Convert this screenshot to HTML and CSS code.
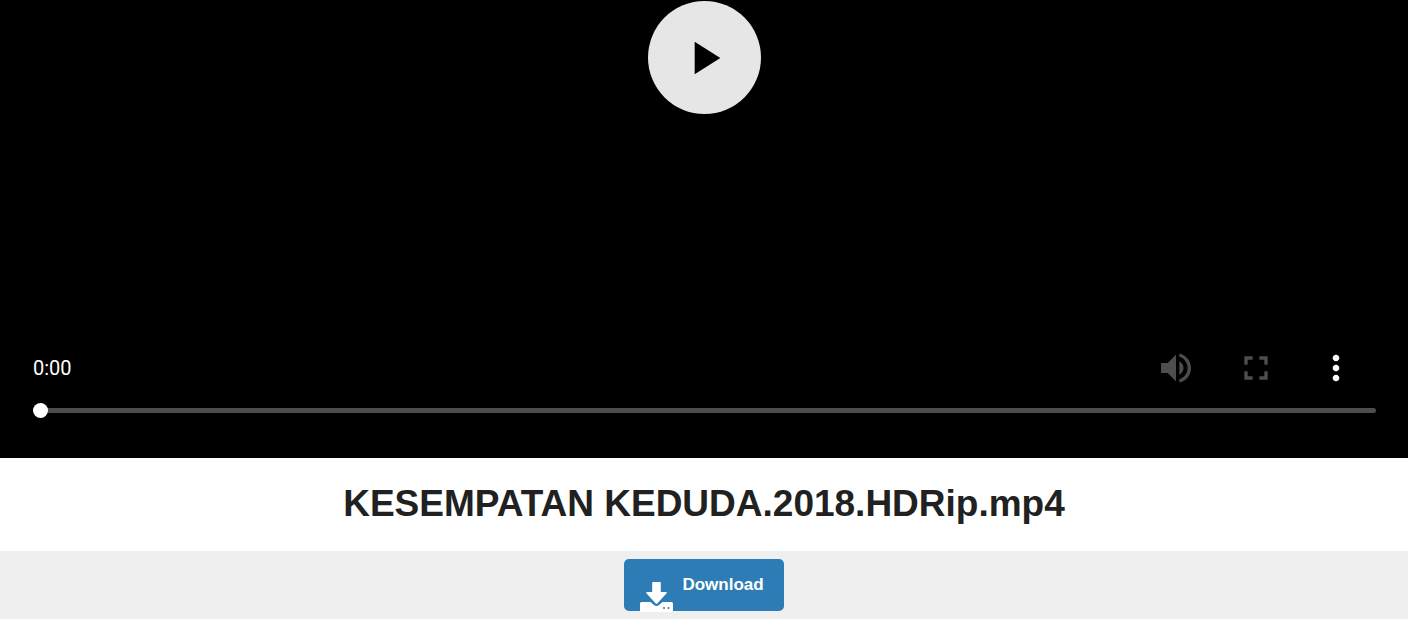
FILE: index.html
```html
<!DOCTYPE html>
<html lang="en">
<head>
    <meta charset="UTF-8">
    <meta name="viewport" content="width=device-width, initial-scale=1.0">
    <title>KESEMPATAN KEDUDA.2018.HDRip.mp4</title>
    <link rel="stylesheet" href="styles.css">
</head>
<body>
    <!-- Video player -->
    <div class="player">
        <button class="play-btn" type="button" aria-label="Play">
            <svg viewBox="0 0 24 24"><path d="M8 5v14l11-7z"/></svg>
        </button>
        <div class="controls">
            <span class="time">0:00</span>
            <button class="control-btn" type="button" aria-label="Mute" disabled>
                <svg viewBox="0 0 24 24"><path d="M3 9v6h4l5 5V4L7 9H3zm13.5 3c0-1.77-1.02-3.29-2.5-4.03v8.05c1.48-.73 2.5-2.25 2.5-4.02zM14 3.23v2.06c2.89.86 5 3.54 5 6.71s-2.11 5.85-5 6.71v2.06c4.01-.91 7-4.49 7-8.77s-2.99-7.86-7-8.77z"/></svg>
            </button>
            <button class="control-btn" type="button" aria-label="Fullscreen" disabled>
                <svg viewBox="0 0 24 24"><path d="M7 14H5v5h5v-2H7v-3zm-2-4h2V7h3V5H5v5zm12 7h-3v2h5v-5h-2v3zM14 5v2h3v3h2V5h-5z"/></svg>
            </button>
            <button class="control-btn" type="button" aria-label="More options">
                <svg viewBox="0 0 24 24"><path d="M12 8c1.1 0 2-.9 2-2s-.9-2-2-2-2 .9-2 2 .9 2 2 2zm0 2c-1.1 0-2 .9-2 2s.9 2 2 2 2-.9 2-2-.9-2-2-2zm0 6c-1.1 0-2 .9-2 2s.9 2 2 2 2-.9 2-2-.9-2-2-2z"/></svg>
            </button>
        </div>
        <input class="timeline" type="range" min="0" max="100" value="0" aria-label="Seek">
    </div>

    <h1 class="title">KESEMPATAN KEDUDA.2018.HDRip.mp4</h1>

    <!-- Download -->
    <div class="download-bar">
        <button class="download-btn" type="button">
            <svg class="download-icon" viewBox="0 0 33 29">
                <path d="M13 0h7q.8 0 .8.800V10h5.200q1.500 0 .6 1.200L17.500 21.200q-1 1-2 0L6.400 11.200Q5.400 10 6.900 10h5.300V.8q0-.8.8-.8z"/>
                <path d="M1.500 20h9l3.500 3q2.500 2 5 0l3.500-3h9q1.500 0 1.500 1.500V30H0v-8.500Q0 20 1.500 20z"/>
                <circle class="light" cx="24" cy="26" r="1"/>
                <circle class="light" cx="28.500" cy="26" r="1"/>
            </svg>
            <span>Download</span>
        </button>
    </div>
</body>
</html>
```
FILE: styles.css
```css
body {
    margin: 0;
    font-family: "Liberation Sans", Arial, sans-serif;
    background-color: #fff;
}
button {
    padding: 0;
    border: 0;
    background: none;
}
svg {
    display: block;
    fill: currentColor;
}
/* Player */
.player {
    display: flex;
    flex-direction: column;
    padding: 1px 32px 40px;
    background-color: #000;
}
.play-btn {
    display: flex;
    align-items: center;
    justify-content: center;
    align-self: center;
    width: 113px;
    height: 113px;
    border-radius: 50%;
    background-color: #e6e6e6;
    color: #000;
}
.play-btn svg {
    width: 56px;
    height: 56px;
}
.controls {
    display: flex;
    align-items: center;
    gap: 40px;
    margin-top: 234px;
    padding-right: 20px;
    color: #fff;
}
.time {
    margin-right: auto;
    padding-left: 1px;
    font-family: Roboto, sans-serif;
    font-size: 20px;
}
.control-btn {
    color: #fff;
}
.control-btn:disabled {
    color: #4d4d4d;
}
.control-btn svg {
    width: 40px;
    height: 40px;
}
/* Seek bar */
.timeline {
    appearance: none;
    -webkit-appearance: none;
    height: 15px;
    margin: 15px 0 0 1px;
    background: none;
}
.timeline::-webkit-slider-runnable-track {
    height: 5px;
    border-radius: 3px;
    background-color: #4d4d4d;
}
.timeline::-webkit-slider-thumb {
    -webkit-appearance: none;
    width: 15px;
    height: 15px;
    margin-top: -5px;
    border-radius: 50%;
    background-color: #fff;
}
/* File name */
.title {
    margin: 0;
    padding: 22px 16px 23px;
    font-size: 37px;
    line-height: 48px;
    text-align: center;
    color: #212121;
}
/* Download */
.download-bar {
    display: flex;
    justify-content: center;
    padding: 8px;
    background-color: #efefef;
}
.download-btn {
    display: flex;
    align-items: center;
    gap: 9px;
    height: 52px;
    padding: 0 20px 0 16px;
    border-radius: 5px;
    background-color: #2d7cb5;
    color: #fff;
    font-family: inherit;
    font-size: 17px;
    font-weight: bold;
    line-height: 20px;
}
.download-btn span {
    padding-bottom: 1px;
}
.download-icon {
    align-self: flex-end;
    width: 33px;
    height: 29px;
    overflow: visible;
}
.download-icon .light {
    fill: #2d7cb5;
}
```
